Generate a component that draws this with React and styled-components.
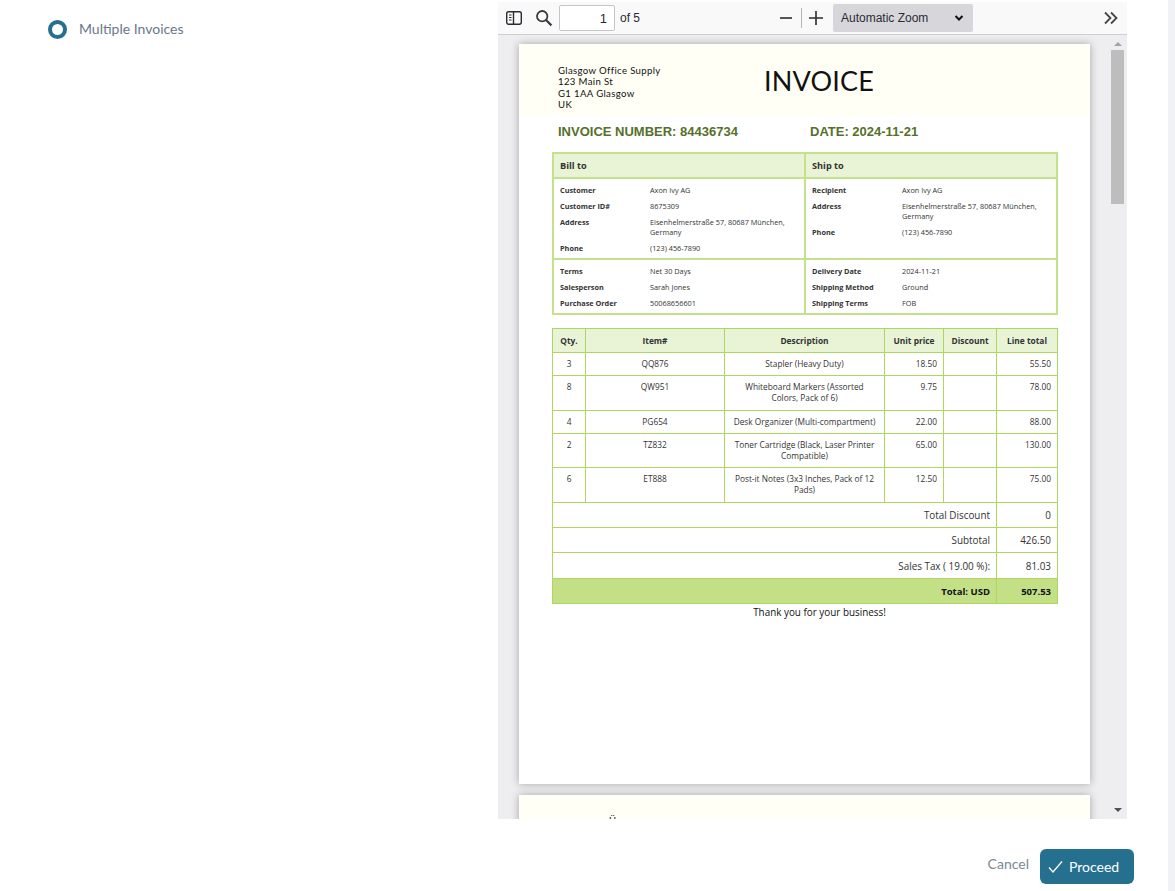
import React from 'react';
import styled, { createGlobalStyle } from 'styled-components';

const Global = createGlobalStyle`
  html, body { margin: 0; padding: 0; background: #fff; overflow: hidden; }
  * { box-sizing: border-box; }
`;

const Shell = styled.div`
  display: flex; width: 1175px; height: 891px; overflow: hidden; background: #fff;
  font-family: Lato, sans-serif;
`;
const Content = styled.div`
  display: flex; flex-direction: column; width: 1168px; height: 891px;
`;
const EdgeStrip = styled.div`
  width: 7px; height: 891px; background: #f0f2f6;
`;
const Top = styled.div`
  display: flex; height: 819px; flex: none;
`;
const StepPanel = styled.div`
  width: 498px; flex: none; padding: 20px 0 0 48px; display: flex; align-items: flex-start; gap: 12px;
`;
const Radio = styled.span`
  width: 19px; height: 19px; flex: none; border-radius: 50%; border: 4.5px solid #26708f; background: #fff;
`;
const StepLabel = styled.span`
  font-size: 14px; line-height: 19px; margin-top: -1px; color: #69788a;
`;
const Viewer = styled.div`
  width: 629px; flex: none; margin-top: 2px; display: flex; flex-direction: column; background: #eeeef0;
`;
const Toolbar = styled.div`
  height: 33px; flex: none; background: #f9f9fa; border-bottom: 1px solid #cfcfd2;
  display: flex; align-items: center; font-family: "Liberation Sans", sans-serif; font-size: 12px; color: #2b2a33;
`;
const ToolIcon = styled.svg`
  width: ${p => p.$w || 18}px; height: 18px; flex: none; margin-left: ${p => p.$ml || 0}px; display: block;
`;
const PageInput = styled.div`
  width: 56px; height: 26px; margin-left: 6px; flex: none; background: #fff; border: 1px solid #c5c5c9; border-radius: 2px;
  display: flex; align-items: center; justify-content: flex-end; padding-right: 7px; font-size: 13px;
`;
const OfPages = styled.span`
  margin-left: 5px; width: 159px; flex: none; font-size: 12px;
`;
const Divider = styled.span`
  width: 1px; height: 20px; margin: 0 6px 0 8px; background: #b5b5b8; flex: none;
`;
const ZoomSelect = styled.div`
  width: 140px; height: 28px; margin-left: 9px; flex: none; background: #d7d7db; border-radius: 2px;
  display: flex; align-items: center; justify-content: space-between; padding: 0 9px 0 8px; font-size: 12px;
`;
const ViewerBody = styled.div`
  flex: 1; display: flex; min-height: 0;
`;
const PagesArea = styled.div`
  flex: 1; overflow: hidden; padding: 9px 0 0 21px; display: flex; flex-direction: column; gap: 11px;
`;
const Sheet = styled.div`
  width: 571px; flex: none; background: #fff; box-shadow: 0 0 8px rgba(0,0,0,.3);
  ${p => p.$first ? 'height: 740px;' : 'height: 200px;'}
`;
const Scroller = styled.div`
  width: 15px; flex: none; margin-right: 2px; display: flex; flex-direction: column; align-items: center; padding: 7px 0 7px;
`;
const Arrow = styled.span`
  width: 0; height: 0; border-left: 4px solid transparent; border-right: 4px solid transparent;
  ${p => p.$down ? 'border-top: 4px solid #505050;' : 'border-bottom: 4px solid #a3a3a3;'}
`;
const Thumb = styled.span`
  width: 13px; height: 154px; background: #bdbdbd; margin-top: 4px;
`;
const Track = styled.span`flex: 1;`;
const Footer = styled.div`
  flex: 1; display: flex; justify-content: flex-end; align-items: flex-start; padding: 30px 34px 0 0; gap: 11px;
`;
const CancelLink = styled.span`
  font-size: 14px; line-height: 30px; color: #7c8894;
`;
const ProceedButton = styled.div`
  width: 94px; height: 35px; border-radius: 6px; background: #26708f; color: #fff; font-size: 14px;
  display: flex; align-items: center; gap: 6px; padding-left: 8px;
`;

/* PDF page */
const InvoiceHead = styled.div`
  height: 72px; background: #fffff5; padding: 21px 0 0 39px; display: flex; font-family: Lato, sans-serif; color: #111;
`;
const SellerBlock = styled.div`
  width: 206px; flex: none; font-size: 9.6px; line-height: 11.4px; letter-spacing: .35px;
`;
const InvoiceTitle = styled.div`
  font-size: 27px; font-weight: 400; line-height: 34px; margin-top: -1px; letter-spacing: .2px;
`;
const MetaRow = styled.div`
  display: flex; height: 36px; padding: 8px 0 0 39px; font: bold 13px/15px "Liberation Sans", sans-serif; color: #56702a;
`;
const MetaNumber = styled.div`width: 252px; flex: none;`;
const Body = styled.div`
  padding: 0 33px 0 33px; font-family: "Open Sans", sans-serif; color: #333;
`;
const PartyGrid = styled.div`
  width: 506px; height: 163px; border: 2px solid #c4e28c; display: grid; grid-template-columns: 252px 1fr; grid-template-rows: 25px 81px 1fr;
`;
const PartyHead = styled.div`
  background: #e9f3d6; font-size: 9.2px; font-weight: 700; line-height: 23px; padding-left: 6px; border-bottom: 2px solid #c4e28c;
  ${p => p.$left && 'border-right: 2px solid #c4e28c;'}
`;
const PartyCell = styled.div`
  padding: 6px 6px 0 6px; font-size: 7.3px; line-height: 10px;
  ${p => p.$left && 'border-right: 2px solid #c4e28c;'}
  ${p => p.$rule && 'border-bottom: 2px solid #c4e28c;'}
`;
const KV = styled.div`
  display: grid; grid-template-columns: 90px 1fr; margin-bottom: 6px;
`;
const Key = styled.span`font-weight: 700;`;
const Items = styled.table`
  margin-top: 13px; width: 505px; height: 275px; border-collapse: collapse; table-layout: fixed; font-size: 8.3px; color: #333;
  th, td { border: 1px solid #add75f; padding: 0 6px; }
  th { background: #e9f3d6; font-size: 8.4px; font-weight: 700; text-align: center; }
  tr.line td { vertical-align: top; padding-top: 5px; line-height: 11px; text-align: center; }
  tr.line td.desc { padding: 5px 6px 0; }
  tr.line td.num { text-align: right; }
  tr.sum td { text-align: right; font-size: 9.9px; }
  tr.grand td { background: #c4e087; font-size: 9.5px; font-weight: 700; color: #111; }
`;
const Thanks = styled.div`
  text-align: center; font-size: 9.9px; line-height: 14px; color: #111; margin-top: 1px; padding-left: 30px;
`;
const NextHead = styled.div`
  height: 24px; background: #fffff5; overflow: hidden; padding: 20px 0 0 90px; font: 9.6px/11px Lato, sans-serif; color: #111;
`;

const billA = [['Customer', 'Axon Ivy AG'], ['Customer ID#', '8675309'], ['Address', 'Eisenhelmerstraße 57, 80687 München, Germany'], ['Phone', '(123) 456-7890']];
const shipA = [['Recipient', 'Axon Ivy AG'], ['Address', 'Eisenhelmerstraße 57, 80687 München, Germany'], ['Phone', '(123) 456-7890']];
const billB = [['Terms', 'Net 30 Days'], ['Salesperson', 'Sarah Jones'], ['Purchase Order', '50068656601']];
const shipB = [['Delivery Date', '2024-11-21'], ['Shipping Method', 'Ground'], ['Shipping Terms', 'FOB']];
const lines = [
  ['3', 'QQ876', 'Stapler (Heavy Duty)', '18.50', '55.50', 23],
  ['8', 'QW951', 'Whiteboard Markers (Assorted Colors, Pack of 6)', '9.75', '78.00', 35],
  ['4', 'PG654', 'Desk Organizer (Multi-compartment)', '22.00', '88.00', 23],
  ['2', 'TZ832', 'Toner Cartridge (Black, Laser Printer Compatible)', '65.00', '130.00', 34],
  ['6', 'ET888', 'Post-it Notes (3x3 Inches, Pack of 12 Pads)', '12.50', '75.00', 35],
];
const sums = [['Total Discount', '0', 25], ['Subtotal', '426.50', 25], ['Sales Tax ( 19.00 %):', '81.03', 26]];

const Pairs = ({ rows }) => rows.map(([k, v]) => <KV key={k}><Key>{k}</Key><span>{v}</span></KV>);

export default function App() {
  return (
    <Shell>
      <Global />
      <Content>
        <Top>
          <StepPanel>
            <Radio />
            <StepLabel>Multiple Invoices</StepLabel>
          </StepPanel>
          <Viewer>
            <Toolbar>
              <ToolIcon viewBox="0 0 18 18" $ml={7} fill="none" stroke="#2b2a33" strokeWidth="1.4">
                <rect x="1.7" y="2.7" width="14.6" height="12.6" rx="2" />
                <path d="M8.5 3v12" />
                <path d="M4 6h2.5M4 8.5h2.5M4 11h2.5" strokeWidth="1.1" />
              </ToolIcon>
              <ToolIcon viewBox="0 0 18 18" $ml={12} fill="none" stroke="#3a3a40" strokeWidth="1.8">
                <circle cx="7.2" cy="7.2" r="5.2" />
                <path d="M11 11l5.4 5.4" strokeWidth="2.2" />
              </ToolIcon>
              <PageInput>1</PageInput>
              <OfPages>of 5</OfPages>
              <ToolIcon viewBox="0 0 14 18" $w={14} fill="none" stroke="#2b2a33" strokeWidth="1.6">
                <path d="M1 9h12" />
              </ToolIcon>
              <Divider />
              <ToolIcon viewBox="0 0 16 18" $w={16} fill="none" stroke="#2b2a33" strokeWidth="1.6">
                <path d="M1 9h14M8 2v14" />
              </ToolIcon>
              <ZoomSelect>
                <span>Automatic Zoom</span>
                <svg width="10" height="8" viewBox="0 0 10 8" fill="none" stroke="#111" strokeWidth="2"><path d="M1.5 2l3.5 3.5L8.5 2" /></svg>
              </ZoomSelect>
              <ToolIcon viewBox="0 0 16 18" $w={16} $ml={130} fill="none" stroke="#45454a" strokeWidth="1.8">
                <path d="M2 3.5L7.5 9 2 14.5M8 3.5L13.5 9 8 14.5" />
              </ToolIcon>
            </Toolbar>
            <ViewerBody>
              <PagesArea>
                <Sheet $first>
                  <InvoiceHead>
                    <SellerBlock>Glasgow Office Supply<br />123 Main St<br />G1 1AA Glasgow<br />UK</SellerBlock>
                    <InvoiceTitle>INVOICE</InvoiceTitle>
                  </InvoiceHead>
                  <MetaRow>
                    <MetaNumber>INVOICE NUMBER: 84436734</MetaNumber>
                    <div>DATE: 2024-11-21</div>
                  </MetaRow>
                  <Body>
                    <PartyGrid>
                      <PartyHead $left>Bill to</PartyHead>
                      <PartyHead>Ship to</PartyHead>
                      <PartyCell $left $rule><Pairs rows={billA} /></PartyCell>
                      <PartyCell $rule><Pairs rows={shipA} /></PartyCell>
                      <PartyCell $left><Pairs rows={billB} /></PartyCell>
                      <PartyCell><Pairs rows={shipB} /></PartyCell>
                    </PartyGrid>
                    <Items>
                      <colgroup>
                        <col style={{ width: 33 }} /><col style={{ width: 139 }} /><col style={{ width: 160 }} />
                        <col style={{ width: 59 }} /><col style={{ width: 53 }} /><col style={{ width: 61 }} />
                      </colgroup>
                      <thead>
                        <tr style={{ height: 24 }}><th>Qty.</th><th>Item#</th><th>Description</th><th>Unit price</th><th>Discount</th><th>Line total</th></tr>
                      </thead>
                      <tbody>
                        {lines.map(l => (
                          <tr className="line" key={l[1]} style={{ height: l[5] }}>
                            <td>{l[0]}</td><td>{l[1]}</td><td className="desc">{l[2]}</td>
                            <td className="num">{l[3]}</td><td /><td className="num">{l[4]}</td>
                          </tr>
                        ))}
                        {sums.map(s => (
                          <tr className="sum" key={s[0]} style={{ height: s[2] }}><td colSpan={5}>{s[0]}</td><td>{s[1]}</td></tr>
                        ))}
                        <tr className="sum grand" style={{ height: 25 }}><td colSpan={5}>Total: USD</td><td>507.53</td></tr>
                      </tbody>
                    </Items>
                    <Thanks>Thank you for your business!</Thanks>
                  </Body>
                </Sheet>
                <Sheet>
                  <NextHead>Ü</NextHead>
                </Sheet>
              </PagesArea>
              <Scroller>
                <Arrow />
                <Thumb />
                <Track />
                <Arrow $down />
              </Scroller>
            </ViewerBody>
          </Viewer>
        </Top>
        <Footer>
          <CancelLink>Cancel</CancelLink>
          <ProceedButton>
            <svg width="15" height="14" viewBox="0 0 15 14" fill="none" stroke="#fff" strokeWidth="1.3"><path d="M1 7.5l4 4.5L14 1.5" /></svg>
            <span>Proceed</span>
          </ProceedButton>
        </Footer>
      </Content>
      <EdgeStrip />
    </Shell>
  );
}
